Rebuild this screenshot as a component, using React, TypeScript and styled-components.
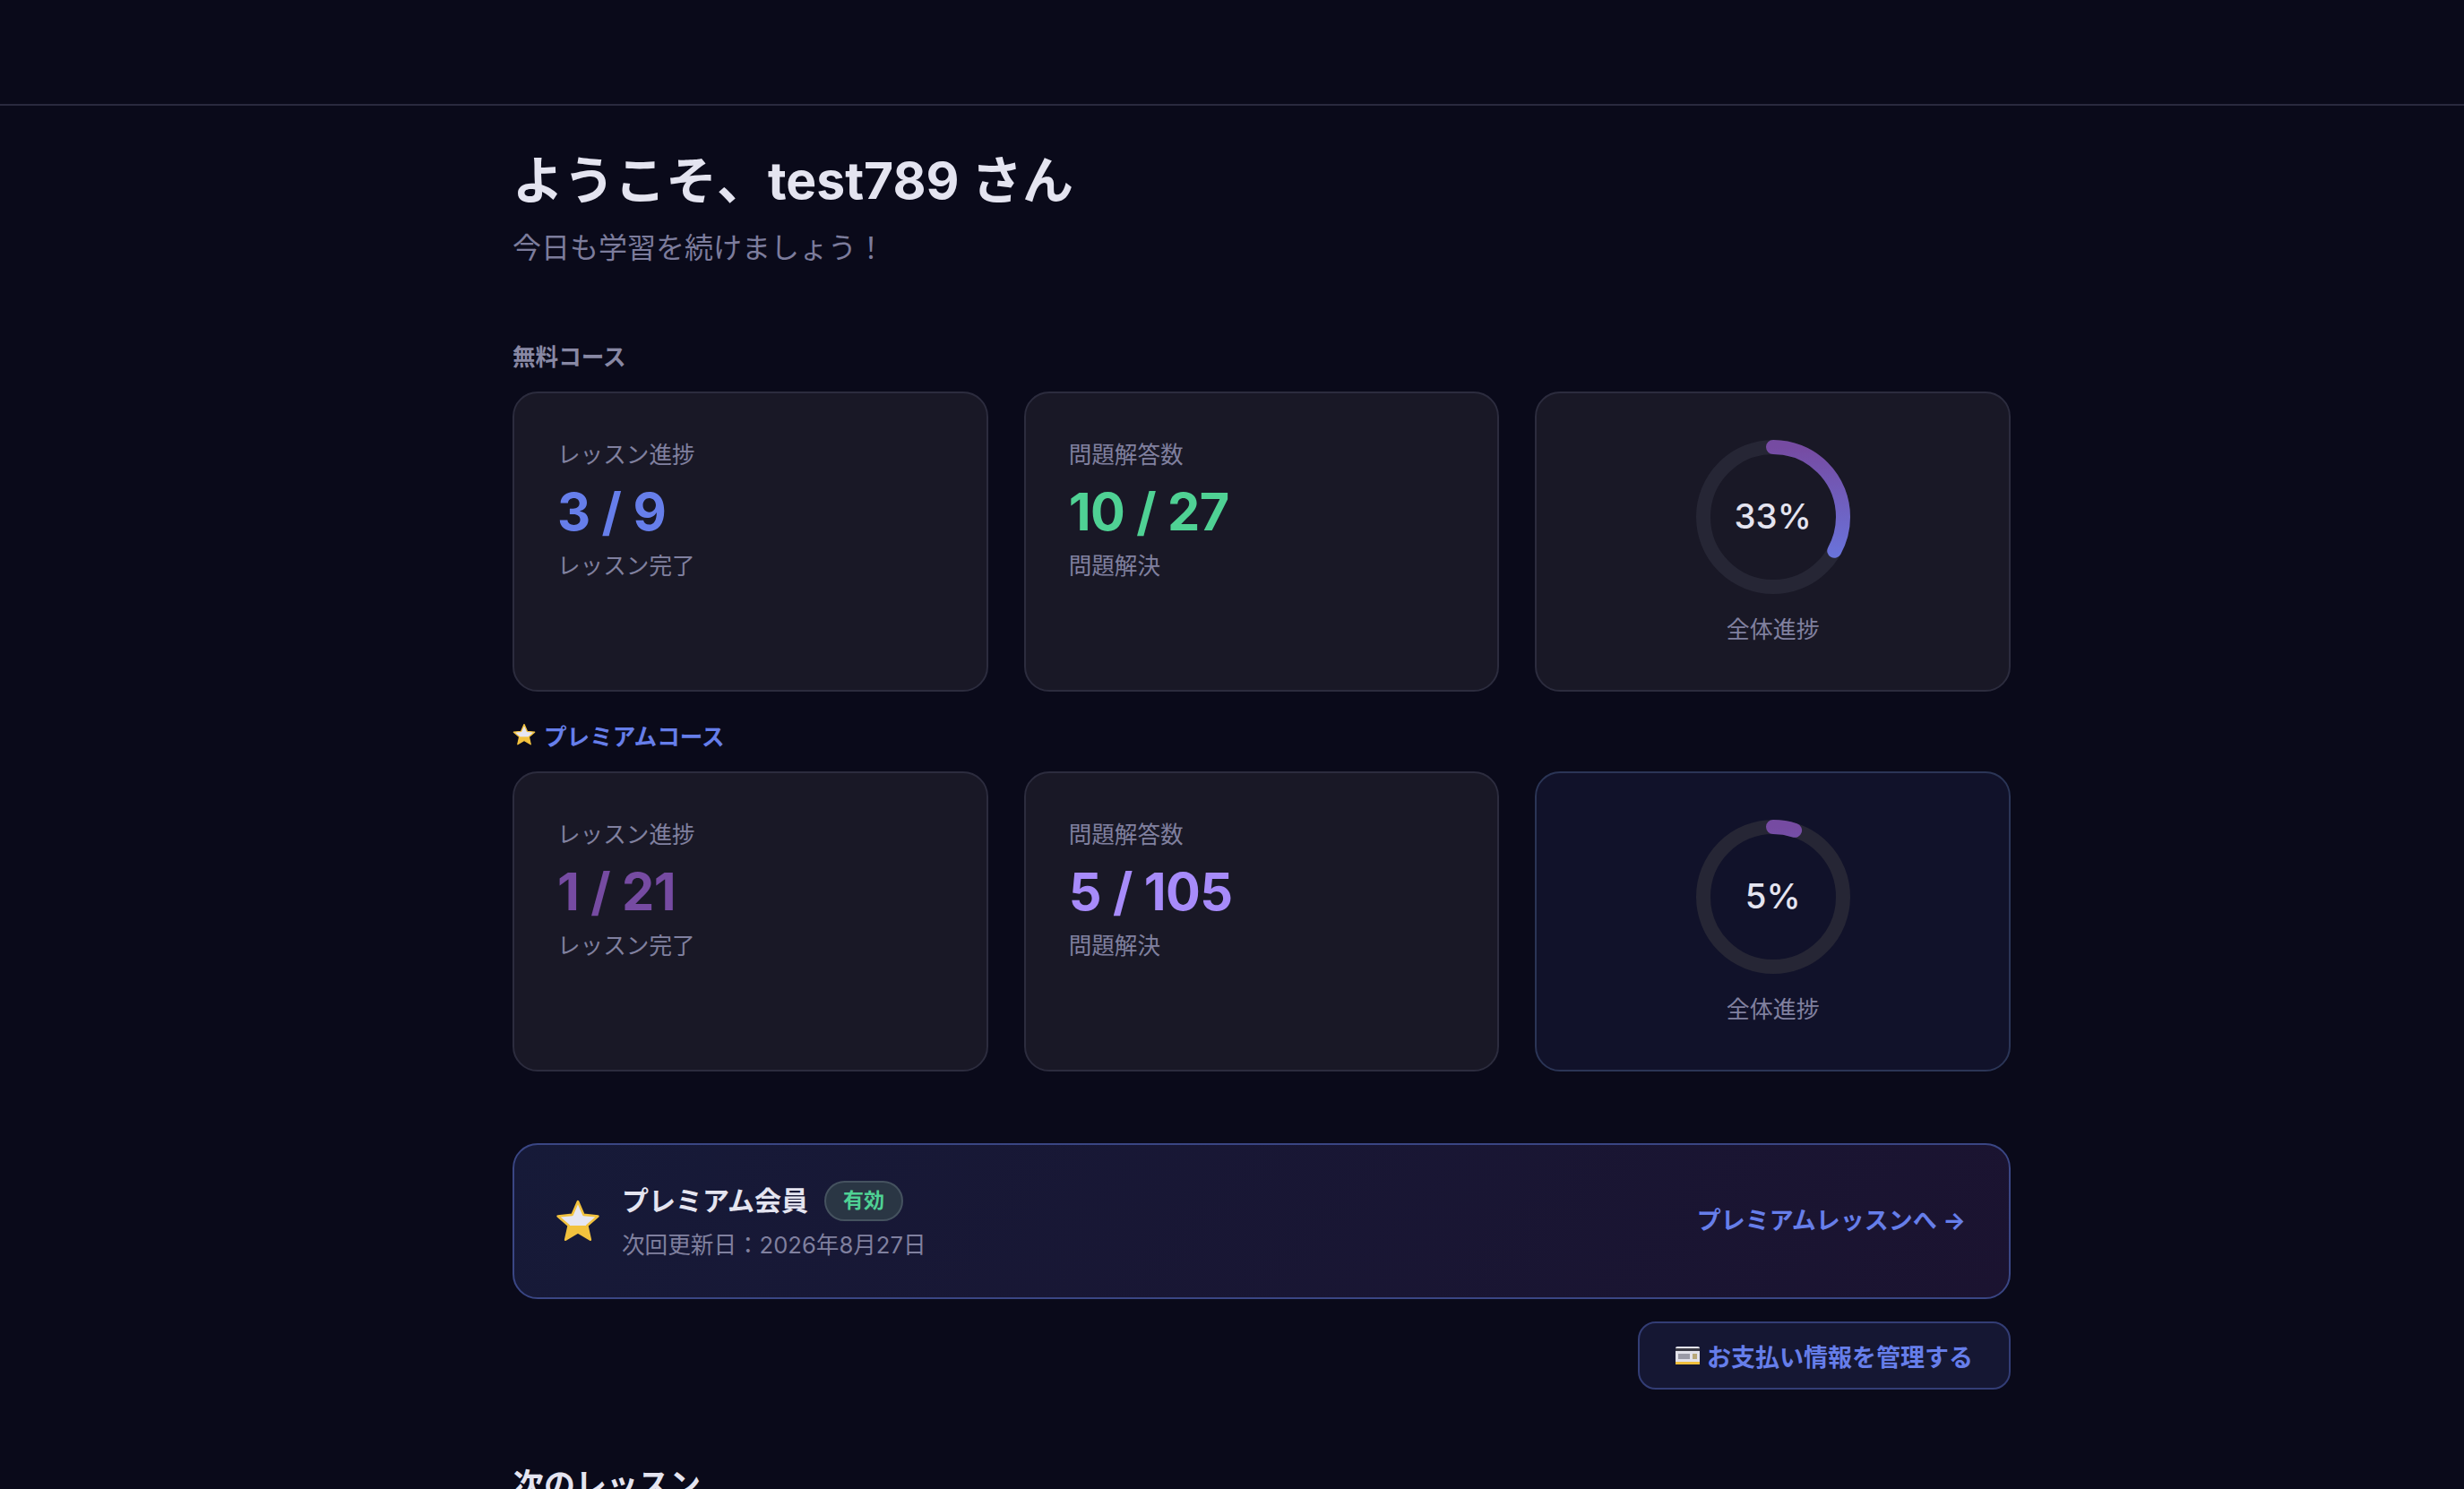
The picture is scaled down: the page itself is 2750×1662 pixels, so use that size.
import React from 'react'
import styled, { createGlobalStyle } from 'styled-components'

const GlobalStyle = createGlobalStyle`
  html, body {
    margin: 0;
    height: 100%;
    overflow: hidden;
    background: #0a0a1a;
  }
  body {
    font-family: Inter, "Noto Sans CJK JP", sans-serif;
    color: #e4e4f0;
  }
`

const Page = styled.div`
  height: 100vh;
  overflow: hidden;
`

const TopBar = styled.header`
  height: 116px;
  border-bottom: 2px solid #2a2a3e;
`

const Main = styled.main`
  width: 1672px;
  margin-left: 572px;
  padding-top: 48px;
`

const Title = styled.h1`
  margin: 0;
  font-size: 57px;
  line-height: 72px;
  font-weight: 700;
  color: #e4e4f0;
`

const Subtitle = styled.p`
  margin: 16px 0 0;
  font-size: 32px;
  line-height: 46px;
  color: #7c7c9c;
`

const SectionLabel = styled.div<{ $premium?: boolean; $first?: boolean }>`
  display: flex;
  align-items: center;
  gap: 9px;
  height: 36px;
  margin: ${p => (p.$first ? '78px' : '30px')} 0 23px;
  font-size: 25.6px;
  font-weight: 700;
  color: ${p => (p.$premium ? '#667eea' : '#8888a4')};
`

const CardGrid = styled.div`
  display: grid;
  grid-template-columns: repeat(3, 1fr);
  gap: 40px;
`

const Card = styled.div<{ $premium?: boolean }>`
  box-sizing: border-box;
  height: 335px;
  padding: 50px 48px 48px;
  border-radius: 28px;
  background: ${p => (p.$premium ? '#11122a' : '#191826')};
  border: 2px solid ${p => (p.$premium ? '#2b3556' : '#2c2c3e')};
`

const RingCard = styled(Card)`
  display: flex;
  flex-direction: column;
  align-items: center;
  padding-top: 52px;
`

const CardLabel = styled.div`
  font-size: 25.6px;
  line-height: 38px;
  color: #80809f;
`

const CardValue = styled.div<{ $color: string }>`
  margin: 8px 0 6px;
  font-size: 57.6px;
  line-height: 72px;
  font-weight: 700;
  letter-spacing: -0.6px;
  color: ${p => p.$color};
`

const RingWrap = styled.div`
  position: relative;
  width: 172px;
  height: 172px;
`

const RingSvg = styled.svg`
  display: block;
  transform: rotate(-90deg);
`

const RingText = styled.div`
  position: absolute;
  inset: 0 0 3px;
  display: flex;
  align-items: center;
  justify-content: center;
  font-size: 38.4px;
  font-weight: 500;
  color: #e4e4f0;
`

const RingLabel = styled(CardLabel)`
  margin-top: 21px;
  font-size: 26px;
`

const Banner = styled.section`
  display: flex;
  align-items: center;
  justify-content: space-between;
  box-sizing: border-box;
  height: 174px;
  margin-top: 80px;
  padding: 0 48px 0 46px;
  border: 2px solid #3a4684;
  border-radius: 28px;
  background: linear-gradient(135deg, #161a38, #1b1330);
`

const BannerInfo = styled.div`
  display: flex;
  align-items: center;
  gap: 24px;
`

const BannerName = styled.div`
  display: flex;
  align-items: center;
  gap: 18px;
  font-size: 30px;
  line-height: 46px;
  font-weight: 700;
  color: #e4e4f0;
`

const Badge = styled.span`
  box-sizing: border-box;
  display: inline-flex;
  align-items: center;
  justify-content: center;
  width: 88px;
  height: 45px;
  border-radius: 23px;
  border: 2px solid #45525f;
  background: #2a3644;
  font-size: 23px;
  font-weight: 700;
  color: #4fd194;
`

const BannerSub = styled.div`
  margin-top: 8px;
  font-size: 25.6px;
  line-height: 38px;
  color: #80809f;
`

const BannerLink = styled.a`
  padding-bottom: 6px;
  font-size: 27px;
  font-weight: 700;
  color: #667eea;
  text-decoration: none;
`

const ManageRow = styled.div`
  display: flex;
  justify-content: flex-end;
  margin-top: 25px;
`

const ManageButton = styled.button`
  display: inline-flex;
  align-items: center;
  justify-content: center;
  gap: 8px;
  box-sizing: border-box;
  width: 416px;
  height: 76px;
  padding: 0;
  white-space: nowrap;
  border: 2px solid #333d75;
  border-radius: 20px;
  background: #151733;
  font-family: inherit;
  font-size: 27px;
  font-weight: 700;
  color: #667eea;
`

const NextTitle = styled.h2`
  margin: 81px 0 0;
  font-size: 35px;
  line-height: 50px;
  font-weight: 700;
  color: #e4e4f0;
`

const Star = ({ size }: { size: number }) => (
  <svg width={size} height={size} viewBox="0 0 48 48">
    <defs>
      <linearGradient id={`star-${size}`} x1="0" y1="0" x2="0" y2="1">
        <stop offset="0.62" stopColor="#e6e6f2" />
        <stop offset="0.63" stopColor="#f2c23e" />
      </linearGradient>
    </defs>
    <path
      d="M24 3l6.2 14.2 15.3 1.5-11.6 10.1 3.4 15.1L24 36l-13.3 7.9 3.4-15.1L2.5 18.7l15.3-1.5z"
      fill={`url(#star-${size})`}
      stroke="#f2c23e"
      strokeWidth="2.5"
      strokeLinejoin="round"
    />
  </svg>
)

const CardIcon = () => (
  <svg width="27" height="20" viewBox="0 0 27 20">
    <rect width="27" height="20" rx="2" fill="#e2e2ea" />
    <rect y="2" width="27" height="3" fill="#3a3a44" />
    <rect y="17" width="27" height="3" fill="#f0bf3c" />
    <rect x="3" y="8" width="13" height="6" fill="#9a9aa6" />
    <rect x="19" y="8" width="5" height="6" fill="#b8a878" />
  </svg>
)

const R = 78
const CIRC = 2 * Math.PI * R

const Ring = ({ percent, id }: { percent: number; id: string }) => (
  <RingWrap>
    <RingSvg width="172" height="172" viewBox="0 0 172 172">
      <defs>
        <linearGradient id={id} x1="0" y1="0" x2="1" y2="0">
          <stop offset="0" stopColor="#667eea" />
          <stop offset="1" stopColor="#764ba2" />
        </linearGradient>
      </defs>
      <circle cx="86" cy="86" r={R} fill="none" stroke="#262635" strokeWidth="16" />
      <circle
        cx="86"
        cy="86"
        r={R}
        fill="none"
        stroke={`url(#${id})`}
        strokeWidth="16"
        strokeLinecap="round"
        strokeDasharray={`${(CIRC * percent) / 100} ${CIRC}`}
      />
    </RingSvg>
    <RingText>{percent}%</RingText>
  </RingWrap>
)

const StatCard = ({ label, value, unit, color }: { label: string; value: string; unit: string; color: string }) => (
  <Card>
    <CardLabel>{label}</CardLabel>
    <CardValue $color={color}>{value}</CardValue>
    <CardLabel>{unit}</CardLabel>
  </Card>
)

export default function App() {
  return (
    <Page>
      <GlobalStyle />
      <TopBar />
      <Main>
        <Title>ようこそ、test789 さん</Title>
        <Subtitle>今日も学習を続けましょう！</Subtitle>

        <SectionLabel $first>無料コース</SectionLabel>
        <CardGrid>
          <StatCard label="レッスン進捗" value="3 / 9" unit="レッスン完了" color="#667eea" />
          <StatCard label="問題解答数" value="10 / 27" unit="問題解決" color="#4fd194" />
          <RingCard>
            <Ring percent={33} id="ring-free" />
            <RingLabel>全体進捗</RingLabel>
          </RingCard>
        </CardGrid>

        <SectionLabel $premium>
          <Star size={26} />
          プレミアムコース
        </SectionLabel>
        <CardGrid>
          <StatCard label="レッスン進捗" value="1 / 21" unit="レッスン完了" color="#764ba2" />
          <StatCard label="問題解答数" value="5 / 105" unit="問題解決" color="#a78bfa" />
          <RingCard $premium>
            <Ring percent={5} id="ring-premium" />
            <RingLabel>全体進捗</RingLabel>
          </RingCard>
        </CardGrid>

        <Banner>
          <BannerInfo>
            <Star size={50} />
            <div>
              <BannerName>
                プレミアム会員
                <Badge>有効</Badge>
              </BannerName>
              <BannerSub>次回更新日：2026年8月27日</BannerSub>
            </div>
          </BannerInfo>
          <BannerLink href="#">プレミアムレッスンへ →</BannerLink>
        </Banner>

        <ManageRow>
          <ManageButton>
            <CardIcon />
            お支払い情報を管理する
          </ManageButton>
        </ManageRow>

        <NextTitle>次のレッスン</NextTitle>
      </Main>
    </Page>
  )
}
